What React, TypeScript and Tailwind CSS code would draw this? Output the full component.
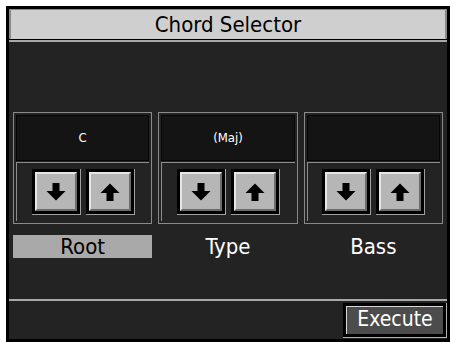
import React from 'react';

const font = { fontFamily: "'DejaVu Sans Condensed', 'DejaVu Sans', sans-serif" };

const Arrow = ({ dir }: { dir: 'down' | 'up' }) => (
    <svg width="20" height="18" viewBox="0 0 20 18">
        {dir === 'down' ? (
            <polygon points="6.5,0 13.5,0 13.5,8 19.5,8 10,17.5 0.5,8 6.5,8" fill="#000" />
        ) : (
            <polygon points="6.5,18 13.5,18 13.5,10 19.5,10 10,0.5 0.5,10 6.5,10" fill="#000" />
        )}
    </svg>
);

const StepButton = ({ dir }: { dir: 'down' | 'up' }) => (
    <div className="border-r border-b border-[#a0a0a0]">
        <div className="border-[3px] border-black">
            <div className="w-[42px] h-[39px] bg-[#b6b6b6] border-t-2 border-l-2 border-[#e6e6e6] border-r-2 border-b-2 border-r-[#6c6c6c] border-b-[#6c6c6c] flex items-center justify-center">
                <Arrow dir={dir} />
            </div>
        </div>
    </div>
);

const Column = ({ value }: { value: string }) => (
    <div className="flex-1 h-[112px] border border-[#8a8a8a] p-[2px] flex flex-col">
        <div className="h-[46px] bg-[#141414] border border-[#050505] flex items-center justify-center text-white text-[13px]" style={font}>
            {value}
        </div>
        <div className="flex-1 mt-[1px] border-t border-l border-[#8c8c8c] flex items-center justify-center gap-[5px]">
            <StepButton dir="down" />
            <StepButton dir="up" />
        </div>
    </div>
);

export default function App() {
    return (
        <div className="w-[454px] h-[342px] bg-white pt-[6px] pl-[6px]">
            <div className="w-[444px] h-[336px] bg-black p-[3px] flex flex-col">
                {/* Title */}
                <div className="h-[30px] bg-[#cfcfcf] border-l-2 border-r-2 border-t border-[#8a8a8a] flex items-center justify-center text-black text-[22px]" style={font}>
                    Chord Selector
                </div>
                <div className="h-[1px] bg-black" />
                <div className="h-[2px] bg-[#a8a8a8]" />

                {/* Body */}
                <div className="flex-1 bg-[#232323] px-[4px] pt-[70px]">
                    <div className="flex gap-[6px]">
                        <Column value="C" />
                        <Column value="(Maj)" />
                        <Column value="" />
                    </div>
                    <div className="flex gap-[6px] mt-[11px]">
                        <div className="flex-1 h-[23px] bg-[#a9a9a9] flex items-center justify-center text-black text-[22px]" style={font}>
                            Root
                        </div>
                        <div className="flex-1 h-[23px] flex items-center justify-center text-white text-[22px]" style={font}>
                            Type
                        </div>
                        <div className="flex-1 h-[23px] flex items-center justify-center text-white text-[22px]" style={font}>
                            Bass
                        </div>
                    </div>
                </div>

                <div className="h-[2px] bg-[#a8a8a8]" />

                {/* Footer */}
                <div className="h-[38px] bg-[#232323] flex items-center justify-end">
                    <div className="border-r border-b border-[#b0b0b0]">
                        <div className="border-[3px] border-black">
                            <div className="w-[97px] h-[28px] bg-[#4c4c4c] border-t border-l border-[#d8d8d8] flex items-center justify-center text-white text-[21px]" style={font}>
                                Execute
                            </div>
                        </div>
                    </div>
                </div>
            </div>
        </div>
    );
}
